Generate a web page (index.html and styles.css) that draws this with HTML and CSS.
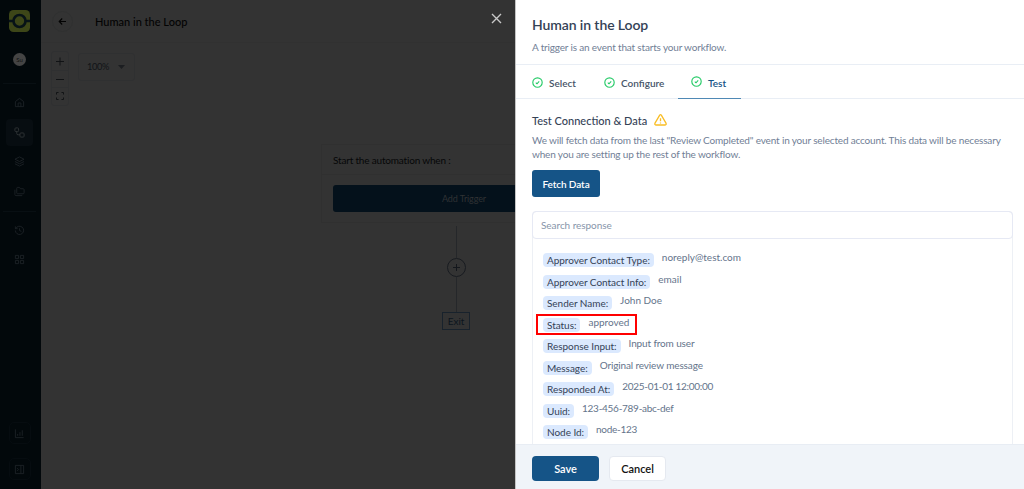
FILE: index.html
```html
<!DOCTYPE html>
<html lang="en">
<head>
<meta charset="utf-8">
<title>Human in the Loop</title>
<link rel="stylesheet" href="styles.css">
</head>
<body>
<div class="app">
  <nav class="sidebar">
    <div class="logo"><svg width="21" height="22" viewBox="0 0 21 22"><rect width="21" height="22" rx="4.5" fill="#3d4618"/><path d="M0 11h4M17 11h4" stroke="#071217" stroke-width="2.4"/><circle cx="10.5" cy="11" r="6" fill="none" stroke="#071217" stroke-width="2.6"/></svg></div>
    <div class="avatar">Su</div>
    <div class="rule rule-top"></div>
    <div class="nav-item"><svg class="ico" viewBox="0 0 24 24"><path d="M3 10 12 3l9 7v11H3zM9 21v-8h6v8"/></svg></div>
    <div class="nav-item active"><svg class="ico" viewBox="0 0 24 24"><rect x="2" y="2" width="8" height="8" rx="2"/><rect x="13" y="13" width="9" height="9" rx="2"/><path d="M6 10v4q0 3 3 3h4"/></svg></div>
    <div class="nav-item"><svg class="ico" viewBox="0 0 24 24"><path d="m12 2 10 5-10 5L2 7zM2 12l10 5 10-5M2 17l10 5 10-5"/></svg></div>
    <div class="nav-item"><svg class="ico" viewBox="0 0 24 24"><path d="M8 17h12q2 0 2-2V8q0-2-2-2h-6l-2-3H8Q6 3 6 5v10q0 2 2 2zM2 8v11q0 2 2 2h14"/></svg></div>
    <div class="rule"></div>
    <div class="nav-item"><svg class="ico" viewBox="0 0 24 24"><path d="M3 12a9 9 0 1 0 3-7L3 8M3 3v5h5M12 7v5l4 2"/></svg></div>
    <div class="nav-item"><svg class="ico" viewBox="0 0 24 24"><path d="M3 3h7v7H3zM14 3h7v7h-7zM3 14h7v7H3zM14 14h7v7h-7z"/></svg></div>
    <div class="nav-end">
      <div class="small-btn"><svg class="ico" viewBox="0 0 24 24"><path d="M3 3v18h18M8 17v-4M13 17V9M18 17V5"/></svg></div>
      <div class="small-btn"><svg class="ico" viewBox="0 0 24 24"><path d="M3 3h18v18H3zM15 3v18M7 9l3 3-3 3"/></svg></div>
    </div>
  </nav>
  <main class="canvas">
    <header class="topbar">
      <div class="back"><svg width="9" height="9" viewBox="0 0 9 9"><path d="M8 4.5H1.200M4.200 1.500l-3 3 3 3" fill="none" stroke="#020202" stroke-width="1.1"/></svg></div>
      <h1 class="page-title">Human in the Loop</h1>
    </header>
    <div class="tools">
      <div class="zoomer">
        <div class="zoom-btn"><svg width="10" height="10" viewBox="0 0 10 10"><path d="M1 5.500h8M5 1.500v8"/></svg></div>
        <div class="zoom-btn"><svg width="10" height="10" viewBox="0 0 10 10"><path d="M1 5.500h8"/></svg></div>
        <div class="zoom-btn"><svg width="10" height="10" viewBox="0 0 10 10"><path d="M1.500 3.500v-2h2M6.500 1.500h2v2M8.500 6.500v2h-2M3.500 8.500h-2v-2"/></svg></div>
      </div>
      <div class="percent"><span>100%</span><svg width="7" height="4" viewBox="0 0 7 4"><path d="M0 0h7L3.500 4z" fill="#1c1e21"/></svg></div>
    </div>
    <section class="flow">
      <div class="trigger">
        <div class="trigger-head">Start the automation when :</div>
        <div class="trigger-body"><div class="add">Add Trigger</div></div>
      </div>
      <div class="line line-a"></div>
      <div class="plus"><svg width="9" height="9" viewBox="0 0 9 9"><path d="M1 4.500h7M4.500 1v7" stroke="#14171c" stroke-width="1"/></svg></div>
      <div class="line line-b"></div>
      <div class="exit">Exit</div>
    </section>
    <svg class="close" width="11" height="11" viewBox="0 0 11 11"><path d="m1 1 9 9M10 1l-9 9" stroke="#c9c9c9" stroke-width="1.400"/></svg>
  </main>
  <aside class="panel">
    <header class="panel-head">
      <h2 class="panel-title">Human in the Loop</h2>
      <p class="panel-sub">A trigger is an event that starts your workflow.</p>
    </header>
    <div class="tabs">
      <div class="tab tab-select"><svg class="check" viewBox="0 0 11 11"><circle cx="5.500" cy="5.500" r="4.700"/><path d="m3.800 5.700 1.200 1.100 2.200-2.400"/></svg><span>Select</span></div>
      <div class="tab tab-configure"><svg class="check" viewBox="0 0 11 11"><circle cx="5.500" cy="5.500" r="4.700"/><path d="m3.800 5.700 1.200 1.100 2.200-2.400"/></svg><span>Configure</span></div>
      <div class="tab tab-test"><svg class="check" viewBox="0 0 11 11"><circle cx="5.500" cy="5.500" r="4.700"/><path d="m3.800 5.700 1.200 1.100 2.200-2.400"/></svg><span>Test</span></div>
    </div>
    <div class="content">
      <h3 class="section-title"><span>Test Connection &amp; Data</span><svg width="13" height="12" viewBox="0 0 13 12"><path d="M5.700 1.200q.8-1.100 1.600 0l4.700 8q.6 1.600-.9 1.800H1.900Q.4 10.800 1 9.200zM6.500 4.200v3M6.500 8.400v1" fill="none" stroke="#f9bd24" stroke-width="1.300" stroke-linejoin="round"/></svg></h3>
      <p class="desc">We will fetch data from the last "Review Completed" event in your selected account. This data will be necessary<br><span class="desc-end">when you are setting up the rest of the workflow.</span></p>
      <button class="fetch">Fetch Data</button>
      <div class="response">
        <div class="search">Search response</div>
        <div class="rows">
          <div class="row"><span class="key">Approver Contact Type:</span><span class="val">noreply@test.com</span></div>
          <div class="row"><span class="key">Approver Contact Info:</span><span class="val">email</span></div>
          <div class="row"><span class="key">Sender Name:</span><span class="val">John Doe</span></div>
          <div class="row marked"><span class="key">Status:</span><span class="val">approved</span></div>
          <div class="row"><span class="key">Response Input:</span><span class="val text">Input from user</span></div>
          <div class="row"><span class="key">Message:</span><span class="val text">Original review message</span></div>
          <div class="row"><span class="key">Responded At:</span><span class="val digits">2025-01-01 12:00:00</span></div>
          <div class="row"><span class="key">Uuid:</span><span class="val digits">123-456-789-abc-def</span></div>
          <div class="row"><span class="key">Node Id:</span><span class="val digits">node-123</span></div>
        </div>
      </div>
    </div>
    <footer class="actions"><button class="save">Save</button><button class="cancel">Cancel</button></footer>
  </aside>
</div>
</body>
</html>
```
FILE: styles.css
```css
*, *::after { box-sizing: border-box; }
body { margin: 0; font-family: Lato, "Liberation Sans", sans-serif; }
h1, h2, h3, p { margin: 0; }
button { font-family: inherit; padding: 0; border: 0; }
.app { display: flex; width: 1024px; height: 489px; overflow: hidden; background: #333; }

.sidebar { width: 41px; background: #02080b; display: flex; flex-direction: column; align-items: center; padding: 10px 2px 0 0; flex: none; }
.logo { height: 22px; }
.logo svg { display: block; }
.avatar { width: 13px; height: 13px; margin-top: 21px; border-radius: 50%; background: #444; color: #111; font-size: 6px; line-height: 13px; text-align: center; }
.rule { width: 33px; height: 1px; background: #080f13; margin: 3px 0 5px; flex: none; }
.rule-top { margin: 17px 0 5px; }
.nav-item { width: 27px; height: 27px; margin-bottom: 2.700px; border-radius: 4px; display: flex; align-items: center; justify-content: center; flex: none; }
.active { background: #070d11; }
.ico { width: 11px; height: 11px; fill: none; stroke: #1d2226; stroke-width: 2; stroke-linejoin: round; }
.active .ico { stroke: #303437; }
.nav-end { margin-top: auto; padding-bottom: 9px; display: flex; flex-direction: column; gap: 14px; }
.small-btn { width: 22px; height: 22px; border: 1px solid #060c10; border-radius: 5px; display: flex; align-items: center; justify-content: center; }

.canvas { width: 475px; flex: none; position: relative; display: flex; flex-direction: column; color: #060708; }
.topbar { height: 43px; display: flex; align-items: center; border-bottom: 1px solid #313131; padding-left: 11px; flex: none; }
.back { width: 21px; height: 21px; border: 1px solid #2f3030; border-radius: 50%; display: flex; align-items: center; justify-content: center; }
.page-title { margin-left: 22px; font-size: 11px; font-weight: 500; letter-spacing: 0; color: #030303; }
.tools { display: flex; align-items: flex-start; padding: 8px 0 0 10px; height: 94px; flex: none; }
.zoomer { width: 18px; border: 1px solid #2f3031; border-radius: 3px; }
.zoom-btn { height: 17.500px; display: flex; align-items: center; justify-content: center; border-top: 1px solid #2f3031; }
.zoom-btn:first-child { border-top: 0; }
.zoom-btn svg { fill: none; stroke: #111315; }
.percent { margin: 2px 0 0 9px; width: 57px; height: 28px; border: 1px solid #2f3031; border-radius: 3px; display: flex; align-items: center; justify-content: space-between; padding: 0 9px 1px 8px; font-size: 9.200px; letter-spacing: -.35px; color: #111418; }
.flow { width: 270px; margin: 7px 0 0 280px; display: flex; flex-direction: column; align-items: center; }
.trigger { width: 270px; height: 79px; border: 1px solid #303030; flex: none; }
.trigger-head { height: 30px; padding-left: 11px; line-height: 30px; font-size: 10px; letter-spacing: -.18px; border-bottom: 1px solid #303030; }
.trigger-body { padding: 10px 11px; }
.add { height: 27px; background: #04111b; border-radius: 3px; color: #303234; font-size: 9px; line-height: 27px; text-align: center; padding-left: 16px; letter-spacing: -.1px; }
.line { width: 1px; background: #25272a; }
.line-a { height: 32px; margin-top: 3px; }
.line-b { height: 35px; }
.plus { width: 19px; height: 19px; border: 1px solid #181b20; border-radius: 50%; display: flex; align-items: center; justify-content: center; }
.exit { width: 28px; height: 18px; border: 1px solid #18222c; font-size: 10px; line-height: 16px; text-align: center; color: #0c151e; }
.close { position: absolute; left: 450px; top: 13px; }

.panel { width: 508px; flex: none; background: #fff; display: flex; flex-direction: column; box-shadow: -1px 0 0 #c4c4c4; position: relative; }
.panel-head { height: 65px; padding: 16px 16px 0; border-bottom: 1px solid #e9eef5; flex: none; }
.panel-title { font-size: 14px; line-height: 18px; font-weight: 600; letter-spacing: -.1px; color: #344256; }
.panel-sub { font-size: 10px; line-height: 14px; margin-top: 6px; letter-spacing: -.17px; color: #718096; }
.tabs { height: 34px; display: flex; border-bottom: 1px solid #e9eef5; flex: none; padding-left: 16px; }
.tab { height: 34px; display: flex; align-items: center; gap: 6px; font-size: 10px; font-weight: 600; color: #475569; padding-top: 2px; }
.tab .check { position: relative; top: -1px; }
.tab-select { width: 72px; }
.tab-configure { width: 74px; }
.tab-test { width: 63px; color: #155487; border-bottom: 1px solid #4f89b5; padding-left: 13px; }
.check { width: 11px; height: 11px; fill: none; stroke: #28cb69; stroke-width: 1.150; }
.content { height: 345px; padding: 14px 11px 0 16px; overflow: hidden; }
.section-title { display: flex; align-items: center; gap: 7px; height: 14px; font-size: 11px; font-weight: 500; color: #344256; }
.desc { margin-top: 7px; font-size: 10px; line-height: 13.500px; letter-spacing: -.16px; white-space: nowrap; color: #718096; }
.fetch { display: block; width: 68px; height: 27px; margin-top: 9px; border-radius: 3px; background: #155487; color: #fff; font-size: 10px; font-weight: 600; padding-top: 1px; letter-spacing: -.1px; }
.response { margin-top: 14px; height: 240px; border: 1px solid #edf0f5; border-radius: 4px; }
.search { height: 28px; margin: -1px; border: 1px solid #e6e9f4; border-radius: 4px; padding-left: 8px; line-height: 27px; font-size: 10px; letter-spacing: -.05px; color: #8795aa; }
.rows { padding: 12px 0 0 3px; }
.row { height: 21.550px; width: max-content; padding-left: 7px; display: flex; align-items: flex-start; font-size: 10px; white-space: nowrap; position: relative; }
.key { height: 14px; margin-top: 3px; padding: 0 4px; border-radius: 4px; background: #dbe9fe; color: #344256; line-height: 15px; letter-spacing: -.04px; }
.val { margin-left: 8px; line-height: 15px; color: #64748b; }
.text { letter-spacing: -.13px; }
.digits { letter-spacing: -.28px; }
.marked::after { content: ""; position: absolute; left: 0; top: -1px; width: 101px; height: 21px; border: 2px solid #f00; }
.actions { height: 45px; background: #f0f4f9; border-top: 1px solid #e8edf4; display: flex; gap: 10px; padding: 11px 16px; }
.save { width: 67px; height: 25px; border-radius: 4px; background: #155487; color: #fff; font-size: 11px; font-weight: 600; }
.cancel { width: 57px; height: 25px; border-radius: 4px; background: #fff; border: 1px solid #e5e9f0; color: #111; font-size: 11px; font-weight: 600; }
```
